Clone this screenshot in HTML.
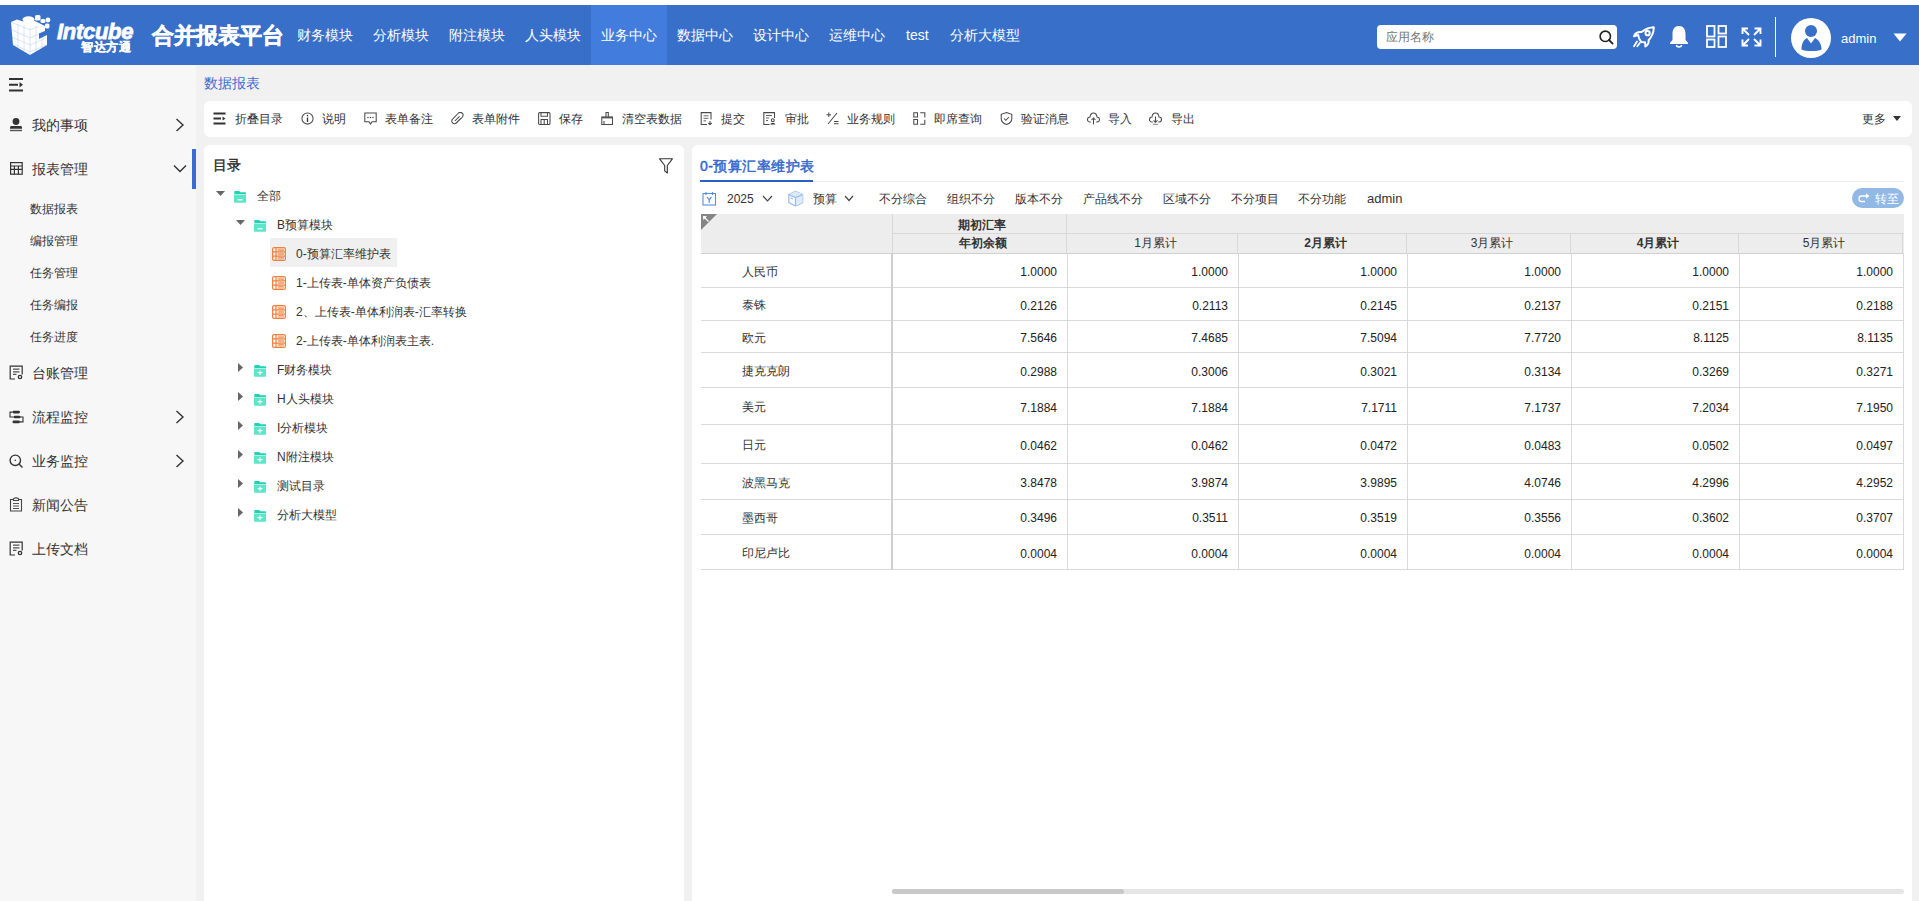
<!DOCTYPE html>
<html><head><meta charset="utf-8">
<style>
*{box-sizing:border-box;margin:0;padding:0}
html,body{width:1919px;height:901px;overflow:hidden;background:#fff;font-family:"Liberation Sans",sans-serif;color:#333}
.abs{position:absolute}
#hdr{position:absolute;left:0;top:5px;width:1919px;height:60px;background:#3870c9}
.nav{position:absolute;top:0;height:60px;line-height:60px;color:#fff;font-size:14px;white-space:nowrap}
.nav.act{background:#427ddd}
#side{position:absolute;left:0;top:65px;width:196px;height:836px;background:#f7f7f7}
#main{position:absolute;left:196px;top:65px;width:1723px;height:836px;background:#f1f1f1}
.card{position:absolute;background:#fff;border-radius:6px}
.mi{position:absolute;left:32px;font-size:14px;line-height:14px;color:#333;white-space:nowrap}
.smi{position:absolute;left:30px;font-size:12px;line-height:12px;color:#333;white-space:nowrap}
.tb{position:absolute;top:0;height:36px;line-height:36px;font-size:12px;color:#333;white-space:nowrap}
.tbi{position:absolute;top:12px;width:13px;height:13px}
.tr{position:absolute;font-size:12px;line-height:12px;color:#333;white-space:nowrap}
.flt{position:absolute;top:192px;font-size:12px;line-height:12px;color:#333;white-space:nowrap}
svg{display:block}
</style></head><body>
<!-- HEADER -->
<div id="hdr">

  <svg class="abs" style="left:0;top:-5px" width="60" height="60" viewBox="0 0 60 60">
    <g fill="#fff">
      <path d="M11,22 L17,19.5 L23,21.5 L29,19 L36,21.5 L39,23 L45,26 L45,31 L39,33.5 L39,39 L47,35 L47,45 L30,55 L13,45 Z"/>
      <ellipse cx="28.5" cy="19.5" rx="6" ry="3.2"/>
      <rect x="35" y="15" width="5.5" height="5.5" rx="1.5"/>
      <rect x="40.5" y="19" width="5" height="4" rx="1.5"/>
      <circle cx="48" cy="20" r="2.4"/>
      <rect x="45" y="23.5" width="4.5" height="5" rx="1.5"/>
    </g>
    <g stroke="#3870c9" stroke-width="0.5" opacity="0.35" fill="none">
      <path d="M18,24 L18,48 M24,25 L24,51 M30,28 L30,55 M36,26 L36,52 M42,31 L42,48"/>
      <path d="M12,30 L30,38 L46,31 M12,37 L30,45 L46,38 M13,44 L30,52 L46,45"/>
      <path d="M11,22 L30,30 L39,26"/>
    </g>
  </svg>
  <div class="abs" style="left:57px;top:16px;font-size:22px;line-height:22px;font-weight:bold;font-style:italic;color:#fff;letter-spacing:-0.3px;-webkit-text-stroke:0.8px #fff">Intcube</div>
  <div class="abs" style="left:81px;top:36px;font-size:12px;line-height:12px;font-weight:bold;color:#fff;letter-spacing:0.5px;-webkit-text-stroke:0.25px #fff">智达方通</div>
  <div class="abs" style="left:152px;top:20px;font-size:22px;line-height:22px;font-weight:bold;color:#fff;-webkit-text-stroke:0.5px #fff">合并报表平台</div>
  <div class="abs" style="left:1377px;top:20px;width:240px;height:24px;background:#fff;border-radius:4px">
    <div class="abs" style="left:9px;top:6px;font-size:12px;line-height:12px;color:#757575">应用名称</div>
    <svg class="abs" style="left:222px;top:5px" width="15" height="15" viewBox="0 0 15 15"><circle cx="6.3" cy="6.3" r="5.2" fill="none" stroke="#222" stroke-width="1.6"/><path d="M10,10 L13.6,13.6" stroke="#222" stroke-width="1.8" stroke-linecap="round"/></svg>
  </div>
  <!-- rocket -->
  <svg class="abs" style="left:1628px;top:17px" width="32" height="28" viewBox="0 0 32 28" fill="none" stroke="#fff" stroke-width="2" stroke-linejoin="round" stroke-linecap="round">
    <path d="M25.8,5.3 C21,5.5 17,7.5 13.5,10 C10,9.8 7,11 6,14.2 L10.2,13 C10.5,15.5 11.5,18 13.2,20 L17,20.2 C17.4,21.7 17.4,23.2 17.3,24.5 C19.5,23.5 21,21.5 20.6,18.2 C24.5,14 25.8,9.5 25.8,5.3 Z"/>
    <circle cx="19.6" cy="11.2" r="2.1"/>
    <path d="M6,24.2 L9,19.5 M9.3,24.2 L11.8,21" stroke-width="1.8"/>
  </svg>
  <!-- bell -->
  <svg class="abs" style="left:1669px;top:20px" width="20" height="24" viewBox="0 0 20 24">
    <path fill="#fff" d="M10,1 C5.5,1 3.5,4.5 3.5,9 L3.5,15 L1.2,17.5 C0.8,18.5 1.2,19 2,19 L18,19 C18.8,19 19.2,18.5 18.8,17.5 L16.5,15 L16.5,9 C16.5,4.5 14.5,1 10,1 Z"/>
    <path fill="none" stroke="#fff" stroke-width="1.5" d="M7.5,20 C7.5,22.5 12.5,22.5 12.5,20"/>
  </svg>
  <!-- grid -->
  <svg class="abs" style="left:1706px;top:20px" width="22" height="23" viewBox="0 0 22 23" fill="none" stroke="#fff" stroke-width="1.8">
    <rect x="1" y="1" width="7.5" height="10.5"/>
    <rect x="1" y="14.5" width="7.5" height="7.5"/>
    <rect x="12.5" y="1" width="7.5" height="7.5"/>
    <rect x="12.5" y="11.5" width="7.5" height="10.5"/>
  </svg>
  <!-- expand -->
  <svg class="abs" style="left:1741px;top:22px" width="21" height="20" viewBox="0 0 21 20" fill="none" stroke="#fff" stroke-width="1.9">
    <path d="M1.5,7 L1.5,1.5 L7,1.5 M1.5,1.5 L8,8"/>
    <path d="M13.5,1.5 L19.5,1.5 L19.5,7 M19.5,1.5 L13,8"/>
    <path d="M1.5,12.5 L1.5,18.5 L7,18.5 M1.5,18.5 L8,12"/>
    <path d="M19.5,12.5 L19.5,18.5 L13.5,18.5 M19.5,18.5 L13,12"/>
  </svg>
  <div class="abs" style="left:1775px;top:12px;width:1px;height:40px;background:#fff"></div>
  <svg class="abs" style="left:1791px;top:13px" width="40" height="40" viewBox="0 0 40 40">
    <circle cx="20" cy="20" r="20" fill="#fff"/>
    <circle cx="20" cy="13" r="6" fill="#3870c9"/>
    <path fill="#3870c9" d="M10.5,31.5 C10.5,25 13,21.5 16,20 L20,25.5 L24,20 C27,21.5 30.5,25 30.5,31.5 C27,33.5 14,33.5 10.5,31.5 Z"/>
  </svg>
  <div class="abs" style="left:1841px;top:27px;font-size:13px;line-height:13px;color:#fff">admin</div>
  <svg class="abs" style="left:1893px;top:28px" width="14" height="9" viewBox="0 0 14 9"><path d="M0.5,0.5 L13.5,0.5 L7,8.5 Z" fill="#fff"/></svg>
  <div class="nav" style="left:287px;width:76px;padding-left:10px">财务模块</div>
  <div class="nav" style="left:363px;width:76px;padding-left:10px">分析模块</div>
  <div class="nav" style="left:439px;width:76px;padding-left:10px">附注模块</div>
  <div class="nav" style="left:515px;width:76px;padding-left:10px">人头模块</div>
  <div class="nav act" style="left:591px;width:76px;padding-left:10px">业务中心</div>
  <div class="nav" style="left:667px;width:76px;padding-left:10px">数据中心</div>
  <div class="nav" style="left:743px;width:76px;padding-left:10px">设计中心</div>
  <div class="nav" style="left:819px;width:76px;padding-left:10px">运维中心</div>
  <div class="nav" style="left:896px;width:44px;padding-left:10px">test</div>
  <div class="nav" style="left:940px;width:90px;padding-left:10px">分析大模型</div>
</div>
<!-- SIDEBAR -->

<div id="side">
  <svg class="abs" style="left:8px;top:12px" width="17" height="16" viewBox="0 0 17 16"><path d="M1,2 L15,2 M1,13.5 L15,13.5 M1,7.8 L10,7.8" stroke="#333" stroke-width="2"/><path d="M11.5,5 L15,7.8 L11.5,10.5 Z" fill="#333"/></svg>
  <!-- 我的事项 -->
  <svg class="abs" style="left:9px;top:52px" width="14" height="15" viewBox="0 0 14 15"><circle cx="7" cy="4.5" r="3.4" fill="#333"/><path d="M2.5,9 L11.5,9 C12.5,9 13,9.6 13,10.5 L13,11.8 L1,11.8 L1,10.5 C1,9.6 1.5,9 2.5,9 Z" fill="#333"/><rect x="1" y="12.8" width="12" height="1.4" fill="#555"/></svg>
  <div class="mi" style="top:53px">我的事项</div>
  <svg class="abs" style="left:175px;top:53px" width="10" height="14" viewBox="0 0 10 14"><path d="M1.5,1 L8,7 L1.5,13" fill="none" stroke="#333" stroke-width="1.4"/></svg>
  <!-- 报表管理 -->
  <svg class="abs" style="left:10px;top:97px" width="13" height="13" viewBox="0 0 13 13" fill="none" stroke="#333" stroke-width="1.2"><rect x="0.6" y="0.6" width="11.6" height="11.6"/><path d="M0.6,4 L12.2,4 M0.6,7.4 L12.2,7.4 M4.4,4 L4.4,12.2 M8.4,4 L8.4,12.2"/></svg>
  <div class="mi" style="top:97px">报表管理</div>
  <svg class="abs" style="left:173px;top:99px" width="14" height="9" viewBox="0 0 14 9"><path d="M1,1.5 L7,7.5 L13,1.5" fill="none" stroke="#333" stroke-width="1.4"/></svg>
  <div class="abs" style="left:192px;top:84px;width:4px;height:40px;background:#3a6bd0"></div>
  <div class="smi" style="top:138px">数据报表</div>
  <div class="smi" style="top:170px">编报管理</div>
  <div class="smi" style="top:202px">任务管理</div>
  <div class="smi" style="top:234px">任务编报</div>
  <div class="smi" style="top:266px">任务进度</div>
  <!-- 台账管理 -->
  <svg class="abs" style="left:9px;top:300px" width="15" height="15" viewBox="0 0 15 15" fill="none" stroke="#333" stroke-width="1.2"><path d="M6,14 L1.2,14 L1.2,1.2 L13.2,1.2 L13.2,9.5"/><path d="M4,4.2 L10.5,4.2 M4,6.8 L10.5,6.8 M4,9.4 L7.5,9.4" stroke="#555" stroke-width="1.3"/><circle cx="11" cy="12" r="1.7" stroke-width="1.3"/></svg>
  <div class="mi" style="top:301px">台账管理</div>
  <!-- 流程监控 -->
  <svg class="abs" style="left:9px;top:345px" width="15" height="14" viewBox="0 0 15 14"><rect x="3.5" y="0.8" width="7.5" height="2.6" rx="1.3" fill="#333"/><rect x="4.5" y="5.7" width="7" height="2.6" rx="1.3" fill="#333"/><rect x="3.5" y="10.6" width="7.5" height="2.6" rx="1.3" fill="#333"/><path d="M3.5,2.1 L1,2.1 L1,7 L4.5,7 M11,7 L14,7 L14,11.9 L11,11.9" fill="none" stroke="#333" stroke-width="1.1"/></svg>
  <div class="mi" style="top:345px">流程监控</div>
  <svg class="abs" style="left:175px;top:345px" width="10" height="14" viewBox="0 0 10 14"><path d="M1.5,1 L8,7 L1.5,13" fill="none" stroke="#333" stroke-width="1.4"/></svg>
  <!-- 业务监控 -->
  <svg class="abs" style="left:9px;top:389px" width="15" height="15" viewBox="0 0 15 15" fill="none" stroke="#333" stroke-width="1.4"><circle cx="6.3" cy="6.3" r="5.2"/><path d="M10.2,10.2 L13.5,13.5"/><circle cx="6.3" cy="6.3" r="0.8" fill="#333" stroke="none"/></svg>
  <div class="mi" style="top:389px">业务监控</div>
  <svg class="abs" style="left:175px;top:389px" width="10" height="14" viewBox="0 0 10 14"><path d="M1.5,1 L8,7 L1.5,13" fill="none" stroke="#333" stroke-width="1.4"/></svg>
  <!-- 新闻公告 -->
  <svg class="abs" style="left:9px;top:432px" width="14" height="15" viewBox="0 0 14 15" fill="none" stroke="#444" stroke-width="1.1"><path d="M4.5,2.5 L1.5,2.5 L1.5,14 L12.5,14 L12.5,2.5 L9.5,2.5"/><path d="M4.5,3.5 L4.5,2 C4.5,0.5 9.5,0.5 9.5,2 L9.5,3.5 Z"/><path d="M4,6.5 L10,6.5 M4,9 L10,9 M4,11.5 L10,11.5" stroke="#555"/></svg>
  <div class="mi" style="top:433px">新闻公告</div>
  <!-- 上传文档 -->
  <svg class="abs" style="left:9px;top:476px" width="15" height="15" viewBox="0 0 15 15" fill="none" stroke="#333" stroke-width="1.2"><path d="M6,14 L1.2,14 L1.2,1.2 L13.2,1.2 L13.2,9.5"/><path d="M4,4.2 L10.5,4.2 M4,6.8 L10.5,6.8 M4,9.4 L7.5,9.4" stroke="#555" stroke-width="1.3"/><circle cx="11" cy="12" r="1.7" stroke-width="1.3"/></svg>
  <div class="mi" style="top:477px">上传文档</div>
</div>
<!-- MAIN -->
<div id="main"></div>
<div class="abs" style="left:204px;top:76px;font-size:14px;line-height:14px;color:#3d6bd0">数据报表</div>
<div class="card" style="left:204px;top:101px;width:1708px;height:36px"></div>
<div class="card" style="left:204px;top:145px;width:480px;height:770px"></div>
<div class="card" style="left:692px;top:145px;width:1220px;height:770px"></div>
<!-- TOOLBAR -->
<svg class="abs" style="left:213px;top:112px" width="13" height="13" viewBox="0 0 13 13"><path d="M0.5,1.5 L12.5,1.5 M0.5,11.5 L12.5,11.5 M0.5,6.5 L8,6.5" stroke="#333" stroke-width="1.8"/><path d="M9.5,4.5 L12.5,6.5 L9.5,8.5 Z" fill="#333"/></svg>
<div class="abs" style="left:235px;top:113px;font-size:12px;line-height:12px;color:#333;white-space:nowrap">折叠目录</div>
<svg class="abs" style="left:301px;top:112px" width="13" height="13" viewBox="0 0 13 13"><circle cx="6.5" cy="6.5" r="5.6" fill="none" stroke="#4a4a4a" stroke-width="1.05"/><path d="M6.5,5.5 L6.5,10" stroke="#333" stroke-width="1.3"/><circle cx="6.5" cy="3.6" r="0.8" fill="#333"/></svg>
<div class="abs" style="left:322px;top:113px;font-size:12px;line-height:12px;color:#333;white-space:nowrap">说明</div>
<svg class="abs" style="left:364px;top:112px" width="13" height="13" viewBox="0 0 13 13"><path d="M0.8,1 L12.2,1 L12.2,9.8 L8,9.8 L6.5,12 L5,9.8 L0.8,9.8 Z" fill="none" stroke="#4a4a4a" stroke-width="1.05"/><circle cx="4" cy="5.5" r="0.7" fill="#333"/><circle cx="6.5" cy="5.5" r="0.7" fill="#333"/><circle cx="9" cy="5.5" r="0.7" fill="#333"/></svg>
<div class="abs" style="left:385px;top:113px;font-size:12px;line-height:12px;color:#333;white-space:nowrap">表单备注</div>
<svg class="abs" style="left:451px;top:112px" width="13" height="13" viewBox="0 0 13 13"><path d="M5,11.5 L11,5.5 C12.5,4 12.5,2 11,1 C9.8,0 8,0.3 7,1.5 L1.8,6.8 C0.5,8 0.5,9.8 1.5,10.8 C2.5,11.8 4.3,11.8 5.3,10.8 L10,6 M3.8,9 L8.5,4.3" fill="none" stroke="#4a4a4a" stroke-width="1.05"/></svg>
<div class="abs" style="left:472px;top:113px;font-size:12px;line-height:12px;color:#333;white-space:nowrap">表单附件</div>
<svg class="abs" style="left:538px;top:112px" width="13" height="13" viewBox="0 0 13 13"><rect x="0.6" y="0.6" width="11.4" height="11.8" rx="1" fill="none" stroke="#4a4a4a" stroke-width="1.05"/><path d="M3,0.8 L3,4.3 L9.5,4.3 L9.5,0.8 M3,12.3 L3,7.5 L9.5,7.5 L9.5,12.3 M6.2,7.5 L6.2,12.3" fill="none" stroke="#4a4a4a" stroke-width="1.05"/></svg>
<div class="abs" style="left:559px;top:113px;font-size:12px;line-height:12px;color:#333;white-space:nowrap">保存</div>
<svg class="abs" style="left:601px;top:112px" width="13" height="13" viewBox="0 0 13 13"><path d="M0.8,12.4 L11.5,12.4 L11.5,5 L0.8,5 Z M0.8,5.2 L11.5,5.2" fill="none" stroke="#4a4a4a" stroke-width="1.05"/><path d="M0.8,5.6 L11.5,5.6" stroke="#555" stroke-width="1.6"/><path d="M5,5 L5,0.5 L7.3,0.5 L7.3,5 M3,12.2 L3,9" fill="none" stroke="#4a4a4a" stroke-width="1.05"/></svg>
<div class="abs" style="left:622px;top:113px;font-size:12px;line-height:12px;color:#333;white-space:nowrap">清空表数据</div>
<svg class="abs" style="left:700px;top:112px" width="13" height="13" viewBox="0 0 13 13"><path d="M7,12.4 L1.2,12.4 L1.2,0.6 L11,0.6 L11,7.5" fill="none" stroke="#4a4a4a" stroke-width="1.05"/><path d="M3.5,3.8 L8.5,3.8 M3.5,6.3 L8.5,6.3 M3.5,8.8 L6,8.8" stroke="#666" stroke-width="1"/><path d="M10,9 L10,12.5 M8.3,10.8 L10,12.8 L11.7,10.8" fill="none" stroke="#4a4a4a" stroke-width="1.05"/></svg>
<div class="abs" style="left:721px;top:113px;font-size:12px;line-height:12px;color:#333;white-space:nowrap">提交</div>
<svg class="abs" style="left:763px;top:112px" width="13" height="13" viewBox="0 0 13 13"><path d="M6.5,12.4 L0.8,12.4 L0.8,0.6 L11.5,0.6 L11.5,6" fill="none" stroke="#4a4a4a" stroke-width="1.05"/><path d="M3,3.5 L9,3.5 M3,6 L6,6 M3,8.5 L5,8.5" stroke="#666" stroke-width="1"/><circle cx="9.8" cy="8.2" r="1.4" fill="none" stroke="#4a4a4a" stroke-width="1.05"/><path d="M7.3,12.5 C7.3,10.5 12.3,10.5 12.3,12.5 Z" fill="#333"/></svg>
<div class="abs" style="left:785px;top:113px;font-size:12px;line-height:12px;color:#333;white-space:nowrap">审批</div>
<svg class="abs" style="left:826px;top:112px" width="13" height="13" viewBox="0 0 13 13"><path d="M0.5,2.8 L5,2.8 M2.8,0.5 L2.8,5 M11,1 L2,12" fill="none" stroke="#4a4a4a" stroke-width="1.05" stroke-width="1.3"/><path d="M8,9.5 L12.5,9.5 M8,11.8 L12.5,11.8" fill="none" stroke="#4a4a4a" stroke-width="1.05" stroke-width="1.3"/></svg>
<div class="abs" style="left:847px;top:113px;font-size:12px;line-height:12px;color:#333;white-space:nowrap">业务规则</div>
<svg class="abs" style="left:913px;top:112px" width="13" height="13" viewBox="0 0 13 13"><path d="M0.8,0.8 L4.5,0.8 L4.5,5 L0.8,5 Z M0.8,7.5 L0.8,12.2 L4.5,12.2 L4.5,7.5 Z M7.2,0.8 L11.8,0.8 L11.8,5.5 M7.2,12.2 L11.8,12.2 L11.8,7.8" fill="none" stroke="#4a4a4a" stroke-width="1.05" stroke-width="1.3"/></svg>
<div class="abs" style="left:934px;top:113px;font-size:12px;line-height:12px;color:#333;white-space:nowrap">即席查询</div>
<svg class="abs" style="left:1000px;top:112px" width="13" height="13" viewBox="0 0 13 13"><path d="M6.5,0.6 L11.8,2.3 L11.8,6.5 C11.8,9.5 9.5,11.5 6.5,12.5 C3.5,11.5 1.2,9.5 1.2,6.5 L1.2,2.3 Z" fill="none" stroke="#4a4a4a" stroke-width="1.05"/><path d="M4,6.5 L5.8,8.3 L9,5" fill="none" stroke="#4a4a4a" stroke-width="1.05"/></svg>
<div class="abs" style="left:1021px;top:113px;font-size:12px;line-height:12px;color:#333;white-space:nowrap">验证消息</div>
<svg class="abs" style="left:1087px;top:112px" width="13" height="13" viewBox="0 0 13 13"><path d="M3.8,10 L3,10 C1.3,10 0.5,8.8 0.5,7.5 C0.5,6 1.6,5 3,5 C3.3,2.5 4.8,1 6.5,1 C8.2,1 9.7,2.5 10,5 C11.4,5 12.5,6 12.5,7.5 C12.5,8.8 11.7,10 10,10 L9.2,10" fill="none" stroke="#4a4a4a" stroke-width="1.05"/><path d="M6.5,12.5 L6.5,6 M4.5,8 L6.5,6 L8.5,8" fill="none" stroke="#4a4a4a" stroke-width="1.05"/></svg>
<div class="abs" style="left:1108px;top:113px;font-size:12px;line-height:12px;color:#333;white-space:nowrap">导入</div>
<svg class="abs" style="left:1149px;top:112px" width="13" height="13" viewBox="0 0 13 13"><path d="M3.8,10 L3,10 C1.3,10 0.5,8.8 0.5,7.5 C0.5,6 1.6,5 3,5 C3.3,2.5 4.8,1 6.5,1 C8.2,1 9.7,2.5 10,5 C11.4,5 12.5,6 12.5,7.5 C12.5,8.8 11.7,10 10,10 L9.2,10" fill="none" stroke="#4a4a4a" stroke-width="1.05"/><path d="M6.5,4.5 L6.5,10.3 M4.5,8.3 L6.5,10.3 L8.5,8.3" fill="none" stroke="#4a4a4a" stroke-width="1.05"/><path d="M3.8,12.3 L9.2,12.3" stroke="#888" stroke-width="1.1"/></svg>
<div class="abs" style="left:1171px;top:113px;font-size:12px;line-height:12px;color:#333;white-space:nowrap">导出</div>
<div class="abs" style="left:1862px;top:113px;font-size:12px;line-height:12px;color:#333">更多</div>
<svg class="abs" style="left:1893px;top:116px" width="8" height="5" viewBox="0 0 8 5"><path d="M0,0 L8,0 L4,5 Z" fill="#333"/></svg>
<!-- CATALOG -->
<div class="abs" style="left:213px;top:158px;font-size:14px;line-height:14px;color:#222;-webkit-text-stroke:0.3px #222">目录</div>
<svg class="abs" style="left:659px;top:158px" width="14" height="16" viewBox="0 0 14 16"><path d="M0.6,0.8 L13.4,0.8 L8.3,7.5 L8.3,15 L5.7,12.8 L5.7,7.5 Z" fill="none" stroke="#333" stroke-width="1.1" stroke-linejoin="round"/></svg>
<div class="abs" style="left:270px;top:238px;width:127px;height:29px;background:#f0f0f0"></div>
<svg class="abs" style="left:216px;top:191px" width="9" height="5" viewBox="0 0 9 5"><path d="M0,0 L9,0 L4.5,5 Z" fill="#666"/></svg>
<svg class="abs" style="left:234px;top:191px" width="12" height="12" viewBox="0 0 12 12"><path d="M0.3,0.8 C0.3,0.3 0.5,0 1,0 L5,0 L6.5,1.3 L11.3,1.3 C11.7,1.3 12,1.6 12,2 L12,3 L0.3,3 Z" fill="#1ed2b3"/><path d="M0,3.6 L12,3.6 L12,10.8 C12,11.4 11.5,11.8 11,11.8 L1,11.8 C0.5,11.8 0,11.4 0,10.8 Z" fill="#5de5ca"/><path d="M3.5,8.8 L8.5,8.8" stroke="#fff" stroke-width="1.2"/></svg>
<div class="tr" style="left:257px;top:190px">全部</div>
<svg class="abs" style="left:236px;top:220px" width="9" height="5" viewBox="0 0 9 5"><path d="M0,0 L9,0 L4.5,5 Z" fill="#666"/></svg>
<svg class="abs" style="left:254px;top:220px" width="12" height="12" viewBox="0 0 12 12"><path d="M0.3,0.8 C0.3,0.3 0.5,0 1,0 L5,0 L6.5,1.3 L11.3,1.3 C11.7,1.3 12,1.6 12,2 L12,3 L0.3,3 Z" fill="#1ed2b3"/><path d="M0,3.6 L12,3.6 L12,10.8 C12,11.4 11.5,11.8 11,11.8 L1,11.8 C0.5,11.8 0,11.4 0,10.8 Z" fill="#5de5ca"/><path d="M3.5,8.8 L8.5,8.8" stroke="#fff" stroke-width="1.2"/></svg>
<div class="tr" style="left:277px;top:219px">B预算模块</div>
<svg class="abs" style="left:272px;top:247px" width="14" height="14" viewBox="0 0 14 14"><rect x="0.6" y="0.6" width="12.8" height="12.8" rx="1.5" fill="none" stroke="#f47f3c" stroke-width="1.2"/><path d="M4,0.6 L4,13.4 M0.6,4.8 L13.4,4.8 M0.6,9.2 L13.4,9.2" stroke="#f47f3c" stroke-width="1.2"/><rect x="6" y="2.2" width="5.8" height="1.4" rx="0.7" fill="none" stroke="#f47f3c" stroke-width="0.8"/><rect x="6" y="6.3" width="5.8" height="1.4" rx="0.7" fill="none" stroke="#f47f3c" stroke-width="0.8"/><rect x="6" y="10.5" width="5.8" height="1.4" rx="0.7" fill="none" stroke="#f47f3c" stroke-width="0.8"/></svg>
<div class="tr" style="left:296px;top:248px">0-预算汇率维护表</div>
<svg class="abs" style="left:272px;top:276px" width="14" height="14" viewBox="0 0 14 14"><rect x="0.6" y="0.6" width="12.8" height="12.8" rx="1.5" fill="none" stroke="#f47f3c" stroke-width="1.2"/><path d="M4,0.6 L4,13.4 M0.6,4.8 L13.4,4.8 M0.6,9.2 L13.4,9.2" stroke="#f47f3c" stroke-width="1.2"/><rect x="6" y="2.2" width="5.8" height="1.4" rx="0.7" fill="none" stroke="#f47f3c" stroke-width="0.8"/><rect x="6" y="6.3" width="5.8" height="1.4" rx="0.7" fill="none" stroke="#f47f3c" stroke-width="0.8"/><rect x="6" y="10.5" width="5.8" height="1.4" rx="0.7" fill="none" stroke="#f47f3c" stroke-width="0.8"/></svg>
<div class="tr" style="left:296px;top:277px">1-上传表-单体资产负债表</div>
<svg class="abs" style="left:272px;top:305px" width="14" height="14" viewBox="0 0 14 14"><rect x="0.6" y="0.6" width="12.8" height="12.8" rx="1.5" fill="none" stroke="#f47f3c" stroke-width="1.2"/><path d="M4,0.6 L4,13.4 M0.6,4.8 L13.4,4.8 M0.6,9.2 L13.4,9.2" stroke="#f47f3c" stroke-width="1.2"/><rect x="6" y="2.2" width="5.8" height="1.4" rx="0.7" fill="none" stroke="#f47f3c" stroke-width="0.8"/><rect x="6" y="6.3" width="5.8" height="1.4" rx="0.7" fill="none" stroke="#f47f3c" stroke-width="0.8"/><rect x="6" y="10.5" width="5.8" height="1.4" rx="0.7" fill="none" stroke="#f47f3c" stroke-width="0.8"/></svg>
<div class="tr" style="left:296px;top:306px">2、上传表-单体利润表-汇率转换</div>
<svg class="abs" style="left:272px;top:334px" width="14" height="14" viewBox="0 0 14 14"><rect x="0.6" y="0.6" width="12.8" height="12.8" rx="1.5" fill="none" stroke="#f47f3c" stroke-width="1.2"/><path d="M4,0.6 L4,13.4 M0.6,4.8 L13.4,4.8 M0.6,9.2 L13.4,9.2" stroke="#f47f3c" stroke-width="1.2"/><rect x="6" y="2.2" width="5.8" height="1.4" rx="0.7" fill="none" stroke="#f47f3c" stroke-width="0.8"/><rect x="6" y="6.3" width="5.8" height="1.4" rx="0.7" fill="none" stroke="#f47f3c" stroke-width="0.8"/><rect x="6" y="10.5" width="5.8" height="1.4" rx="0.7" fill="none" stroke="#f47f3c" stroke-width="0.8"/></svg>
<div class="tr" style="left:296px;top:335px">2-上传表-单体利润表主表.</div>
<svg class="abs" style="left:238px;top:363px" width="5" height="9" viewBox="0 0 5 9"><path d="M0,0 L5,4.5 L0,9 Z" fill="#666"/></svg>
<svg class="abs" style="left:254px;top:365px" width="12" height="12" viewBox="0 0 12 12"><path d="M0.3,0.8 C0.3,0.3 0.5,0 1,0 L5,0 L6.5,1.3 L11.3,1.3 C11.7,1.3 12,1.6 12,2 L12,3 L0.3,3 Z" fill="#1ed2b3"/><path d="M0,3.6 L12,3.6 L12,10.8 C12,11.4 11.5,11.8 11,11.8 L1,11.8 C0.5,11.8 0,11.4 0,10.8 Z" fill="#5de5ca"/><path d="M3.6,7.6 L8.4,7.6 M6,5.4 L6,10" stroke="#fff" stroke-width="1.1"/></svg>
<div class="tr" style="left:277px;top:364px">F财务模块</div>
<svg class="abs" style="left:238px;top:392px" width="5" height="9" viewBox="0 0 5 9"><path d="M0,0 L5,4.5 L0,9 Z" fill="#666"/></svg>
<svg class="abs" style="left:254px;top:394px" width="12" height="12" viewBox="0 0 12 12"><path d="M0.3,0.8 C0.3,0.3 0.5,0 1,0 L5,0 L6.5,1.3 L11.3,1.3 C11.7,1.3 12,1.6 12,2 L12,3 L0.3,3 Z" fill="#1ed2b3"/><path d="M0,3.6 L12,3.6 L12,10.8 C12,11.4 11.5,11.8 11,11.8 L1,11.8 C0.5,11.8 0,11.4 0,10.8 Z" fill="#5de5ca"/><path d="M3.6,7.6 L8.4,7.6 M6,5.4 L6,10" stroke="#fff" stroke-width="1.1"/></svg>
<div class="tr" style="left:277px;top:393px">H人头模块</div>
<svg class="abs" style="left:238px;top:421px" width="5" height="9" viewBox="0 0 5 9"><path d="M0,0 L5,4.5 L0,9 Z" fill="#666"/></svg>
<svg class="abs" style="left:254px;top:423px" width="12" height="12" viewBox="0 0 12 12"><path d="M0.3,0.8 C0.3,0.3 0.5,0 1,0 L5,0 L6.5,1.3 L11.3,1.3 C11.7,1.3 12,1.6 12,2 L12,3 L0.3,3 Z" fill="#1ed2b3"/><path d="M0,3.6 L12,3.6 L12,10.8 C12,11.4 11.5,11.8 11,11.8 L1,11.8 C0.5,11.8 0,11.4 0,10.8 Z" fill="#5de5ca"/><path d="M3.6,7.6 L8.4,7.6 M6,5.4 L6,10" stroke="#fff" stroke-width="1.1"/></svg>
<div class="tr" style="left:277px;top:422px">I分析模块</div>
<svg class="abs" style="left:238px;top:450px" width="5" height="9" viewBox="0 0 5 9"><path d="M0,0 L5,4.5 L0,9 Z" fill="#666"/></svg>
<svg class="abs" style="left:254px;top:452px" width="12" height="12" viewBox="0 0 12 12"><path d="M0.3,0.8 C0.3,0.3 0.5,0 1,0 L5,0 L6.5,1.3 L11.3,1.3 C11.7,1.3 12,1.6 12,2 L12,3 L0.3,3 Z" fill="#1ed2b3"/><path d="M0,3.6 L12,3.6 L12,10.8 C12,11.4 11.5,11.8 11,11.8 L1,11.8 C0.5,11.8 0,11.4 0,10.8 Z" fill="#5de5ca"/><path d="M3.6,7.6 L8.4,7.6 M6,5.4 L6,10" stroke="#fff" stroke-width="1.1"/></svg>
<div class="tr" style="left:277px;top:451px">N附注模块</div>
<svg class="abs" style="left:238px;top:479px" width="5" height="9" viewBox="0 0 5 9"><path d="M0,0 L5,4.5 L0,9 Z" fill="#666"/></svg>
<svg class="abs" style="left:254px;top:481px" width="12" height="12" viewBox="0 0 12 12"><path d="M0.3,0.8 C0.3,0.3 0.5,0 1,0 L5,0 L6.5,1.3 L11.3,1.3 C11.7,1.3 12,1.6 12,2 L12,3 L0.3,3 Z" fill="#1ed2b3"/><path d="M0,3.6 L12,3.6 L12,10.8 C12,11.4 11.5,11.8 11,11.8 L1,11.8 C0.5,11.8 0,11.4 0,10.8 Z" fill="#5de5ca"/><path d="M3.6,7.6 L8.4,7.6 M6,5.4 L6,10" stroke="#fff" stroke-width="1.1"/></svg>
<div class="tr" style="left:277px;top:480px">测试目录</div>
<svg class="abs" style="left:238px;top:508px" width="5" height="9" viewBox="0 0 5 9"><path d="M0,0 L5,4.5 L0,9 Z" fill="#666"/></svg>
<svg class="abs" style="left:254px;top:510px" width="12" height="12" viewBox="0 0 12 12"><path d="M0.3,0.8 C0.3,0.3 0.5,0 1,0 L5,0 L6.5,1.3 L11.3,1.3 C11.7,1.3 12,1.6 12,2 L12,3 L0.3,3 Z" fill="#1ed2b3"/><path d="M0,3.6 L12,3.6 L12,10.8 C12,11.4 11.5,11.8 11,11.8 L1,11.8 C0.5,11.8 0,11.4 0,10.8 Z" fill="#5de5ca"/><path d="M3.6,7.6 L8.4,7.6 M6,5.4 L6,10" stroke="#fff" stroke-width="1.1"/></svg>
<div class="tr" style="left:277px;top:509px">分析大模型</div>
<!-- REPORT -->
<div class="abs" style="left:701px;top:181px;width:1203px;height:1px;background:#ebebeb"></div>
<div class="abs" style="left:700px;top:159px;font-size:14px;line-height:14px;color:#3065cc;-webkit-text-stroke:0.45px #3065cc;letter-spacing:0.5px;white-space:nowrap">0-预算汇率维护表</div>
<div class="abs" style="left:700px;top:180px;width:113px;height:2px;background:#2a5fc9"></div>
<svg class="abs" style="left:702px;top:191px" width="15" height="15" viewBox="0 0 15 15" fill="none" stroke="#5590dc" stroke-width="1.1"><rect x="1" y="2.5" width="12.5" height="11.5"/><path d="M4,1 L4,4 M10.5,1 L10.5,4"/><path d="M5,6 L7.2,8.8 L9.5,6 M7.2,8.8 L7.2,12" stroke-width="1.2"/></svg>
<div class="flt" style="left:727px;top:193px">2025</div>
<svg class="abs" style="left:762px;top:195px" width="11" height="7" viewBox="0 0 11 7"><path d="M1,1 L5.5,5.8 L10,1" fill="none" stroke="#444" stroke-width="1.2"/></svg>
<svg class="abs" style="left:787px;top:190px" width="17" height="17" viewBox="0 0 17 17"><path d="M1.8,4.6 L8.5,1.3 L15.6,4.6 L15.6,12.6 L8.5,16 L1.8,12.6 Z" fill="#fff" stroke="#9ebdf0" stroke-width="1.3" stroke-linejoin="round"/><path d="M8.5,7.5 L15.6,4.6 L15.6,12.6 L8.5,16 Z" fill="#e0eafb"/><path d="M8.5,1.3 L15.6,4.6 L8.5,7.6 L1.8,4.6 Z" fill="#dde8fa"/><path d="M1.8,4.6 L8.5,7.6 L15.6,4.6 M8.5,7.6 L8.5,16" fill="none" stroke="#9ebdf0" stroke-width="1.3"/><path d="M3.5,7.8 L6,9" stroke="#9ebdf0" stroke-width="1.2"/></svg>
<div class="flt" style="left:813px;top:193px">预算</div>
<svg class="abs" style="left:844px;top:195px" width="10" height="7" viewBox="0 0 10 7"><path d="M1,1 L5,5.5 L9,1" fill="none" stroke="#444" stroke-width="1.2"/></svg>
<div class="flt" style="left:879px;top:193px">不分综合</div>
<div class="flt" style="left:947px;top:193px">组织不分</div>
<div class="flt" style="left:1015px;top:193px">版本不分</div>
<div class="flt" style="left:1083px;top:193px">产品线不分</div>
<div class="flt" style="left:1163px;top:193px">区域不分</div>
<div class="flt" style="left:1231px;top:193px">不分项目</div>
<div class="flt" style="left:1298px;top:193px">不分功能</div>
<div class="flt" style="left:1367px;top:192px;font-size:13px;line-height:13px">admin</div>
<div class="abs" style="left:1852px;top:188px;width:52px;height:20px;border-radius:10px;background:#92b9e6"></div>
<svg class="abs" style="left:1858px;top:193px" width="12" height="10" viewBox="0 0 12 10"><path d="M10,3 L3.5,3 C1.8,3 1,4 1,5.7 C1,7.4 1.8,8.5 3.5,8.5 L7,8.5" fill="none" stroke="#fff" stroke-width="1.3"/><path d="M8,0.3 L11.5,3 L8,5.7 Z" fill="#fff"/></svg>
<div class="abs" style="left:1875px;top:193px;font-size:12px;line-height:12px;color:#fff">转至</div>
<!-- TABLE -->
<div class="abs" style="left:701px;top:214px;width:1203px;height:40px;background:#ededed"></div>
<div class="abs" style="left:701px;top:253px;width:1203px;height:1px;background:#d0d0d0"></div>
<div class="abs" style="left:892px;top:233px;width:1012px;height:1px;background:#d8d8d8"></div>
<div class="abs" style="left:892px;top:214px;width:1px;height:39px;background:#d8d8d8"></div>
<div class="abs" style="left:1066px;top:214px;width:1px;height:39px;background:#d8d8d8"></div>
<div class="abs" style="left:1237px;top:233px;width:1px;height:20px;background:#d8d8d8"></div>
<div class="abs" style="left:1406px;top:233px;width:1px;height:20px;background:#d8d8d8"></div>
<div class="abs" style="left:1570px;top:233px;width:1px;height:20px;background:#d8d8d8"></div>
<div class="abs" style="left:1738px;top:233px;width:1px;height:20px;background:#d8d8d8"></div>
<div class="abs" style="left:1902px;top:233px;width:1px;height:20px;background:#d8d8d8"></div>
<svg class="abs" style="left:701px;top:214px" width="17" height="17" viewBox="0 0 17 17"><path d="M0,0 L16,0 L0,16 Z" fill="#858585"/><path d="M2.6,2.6 L7.5,7.5" stroke="#fff" stroke-width="1.1"/><path d="M2,2 L6,2.3 L2.3,6 Z" fill="#fff"/></svg>
<div class="abs" style="left:895px;top:219px;width:174px;text-align:center;font-size:12px;line-height:12px;font-weight:bold;color:#333">期初汇率</div>
<div class="abs" style="left:895px;top:237px;width:175px;text-align:center;font-size:12px;line-height:12px;font-weight:bold;color:#333">年初余额</div>
<div class="abs" style="left:1070px;top:237px;width:171px;text-align:center;font-size:12px;line-height:12px;color:#333">1月累计</div>
<div class="abs" style="left:1241px;top:237px;width:169px;text-align:center;font-size:12px;line-height:12px;font-weight:bold;color:#333">2月累计</div>
<div class="abs" style="left:1410px;top:237px;width:164px;text-align:center;font-size:12px;line-height:12px;color:#333">3月累计</div>
<div class="abs" style="left:1574px;top:237px;width:168px;text-align:center;font-size:12px;line-height:12px;font-weight:bold;color:#333">4月累计</div>
<div class="abs" style="left:1742px;top:237px;width:164px;text-align:center;font-size:12px;line-height:12px;color:#333">5月累计</div>
<div class="abs" style="left:701px;top:287px;width:1203px;height:1px;background:#d9d9d9"></div>
<div class="abs" style="left:701px;top:320px;width:1203px;height:1px;background:#d9d9d9"></div>
<div class="abs" style="left:701px;top:352px;width:1203px;height:1px;background:#d9d9d9"></div>
<div class="abs" style="left:701px;top:387px;width:1203px;height:1px;background:#d9d9d9"></div>
<div class="abs" style="left:701px;top:424px;width:1203px;height:1px;background:#d9d9d9"></div>
<div class="abs" style="left:701px;top:463px;width:1203px;height:1px;background:#d9d9d9"></div>
<div class="abs" style="left:701px;top:499px;width:1203px;height:1px;background:#d9d9d9"></div>
<div class="abs" style="left:701px;top:534px;width:1203px;height:1px;background:#d9d9d9"></div>
<div class="abs" style="left:701px;top:569px;width:1203px;height:1px;background:#d9d9d9"></div>
<div class="abs" style="left:891px;top:254px;width:2px;height:316px;background:#cfcfcf"></div>
<div class="abs" style="left:1067px;top:253px;width:1px;height:316px;background:#d9d9d9"></div>
<div class="abs" style="left:1238px;top:253px;width:1px;height:316px;background:#d9d9d9"></div>
<div class="abs" style="left:1407px;top:253px;width:1px;height:316px;background:#d9d9d9"></div>
<div class="abs" style="left:1571px;top:253px;width:1px;height:316px;background:#d9d9d9"></div>
<div class="abs" style="left:1739px;top:253px;width:1px;height:316px;background:#d9d9d9"></div>
<div class="abs" style="left:1903px;top:253px;width:1px;height:316px;background:#d9d9d9"></div>
<div class="abs" style="left:742px;top:266px;font-size:12px;line-height:12px;color:#333;white-space:nowrap">人民币</div>
<div class="abs" style="left:957px;top:266px;width:100px;text-align:right;font-size:12px;line-height:12px;color:#222">1.0000</div>
<div class="abs" style="left:1128px;top:266px;width:100px;text-align:right;font-size:12px;line-height:12px;color:#222">1.0000</div>
<div class="abs" style="left:1297px;top:266px;width:100px;text-align:right;font-size:12px;line-height:12px;color:#222">1.0000</div>
<div class="abs" style="left:1461px;top:266px;width:100px;text-align:right;font-size:12px;line-height:12px;color:#222">1.0000</div>
<div class="abs" style="left:1629px;top:266px;width:100px;text-align:right;font-size:12px;line-height:12px;color:#222">1.0000</div>
<div class="abs" style="left:1793px;top:266px;width:100px;text-align:right;font-size:12px;line-height:12px;color:#222">1.0000</div>
<div class="abs" style="left:742px;top:299px;font-size:12px;line-height:12px;color:#333;white-space:nowrap">泰铢</div>
<div class="abs" style="left:957px;top:300px;width:100px;text-align:right;font-size:12px;line-height:12px;color:#222">0.2126</div>
<div class="abs" style="left:1128px;top:300px;width:100px;text-align:right;font-size:12px;line-height:12px;color:#222">0.2113</div>
<div class="abs" style="left:1297px;top:300px;width:100px;text-align:right;font-size:12px;line-height:12px;color:#222">0.2145</div>
<div class="abs" style="left:1461px;top:300px;width:100px;text-align:right;font-size:12px;line-height:12px;color:#222">0.2137</div>
<div class="abs" style="left:1629px;top:300px;width:100px;text-align:right;font-size:12px;line-height:12px;color:#222">0.2151</div>
<div class="abs" style="left:1793px;top:300px;width:100px;text-align:right;font-size:12px;line-height:12px;color:#222">0.2188</div>
<div class="abs" style="left:742px;top:332px;font-size:12px;line-height:12px;color:#333;white-space:nowrap">欧元</div>
<div class="abs" style="left:957px;top:332px;width:100px;text-align:right;font-size:12px;line-height:12px;color:#222">7.5646</div>
<div class="abs" style="left:1128px;top:332px;width:100px;text-align:right;font-size:12px;line-height:12px;color:#222">7.4685</div>
<div class="abs" style="left:1297px;top:332px;width:100px;text-align:right;font-size:12px;line-height:12px;color:#222">7.5094</div>
<div class="abs" style="left:1461px;top:332px;width:100px;text-align:right;font-size:12px;line-height:12px;color:#222">7.7720</div>
<div class="abs" style="left:1629px;top:332px;width:100px;text-align:right;font-size:12px;line-height:12px;color:#222">8.1125</div>
<div class="abs" style="left:1793px;top:332px;width:100px;text-align:right;font-size:12px;line-height:12px;color:#222">8.1135</div>
<div class="abs" style="left:742px;top:365px;font-size:12px;line-height:12px;color:#333;white-space:nowrap">捷克克朗</div>
<div class="abs" style="left:957px;top:366px;width:100px;text-align:right;font-size:12px;line-height:12px;color:#222">0.2988</div>
<div class="abs" style="left:1128px;top:366px;width:100px;text-align:right;font-size:12px;line-height:12px;color:#222">0.3006</div>
<div class="abs" style="left:1297px;top:366px;width:100px;text-align:right;font-size:12px;line-height:12px;color:#222">0.3021</div>
<div class="abs" style="left:1461px;top:366px;width:100px;text-align:right;font-size:12px;line-height:12px;color:#222">0.3134</div>
<div class="abs" style="left:1629px;top:366px;width:100px;text-align:right;font-size:12px;line-height:12px;color:#222">0.3269</div>
<div class="abs" style="left:1793px;top:366px;width:100px;text-align:right;font-size:12px;line-height:12px;color:#222">0.3271</div>
<div class="abs" style="left:742px;top:401px;font-size:12px;line-height:12px;color:#333;white-space:nowrap">美元</div>
<div class="abs" style="left:957px;top:402px;width:100px;text-align:right;font-size:12px;line-height:12px;color:#222">7.1884</div>
<div class="abs" style="left:1128px;top:402px;width:100px;text-align:right;font-size:12px;line-height:12px;color:#222">7.1884</div>
<div class="abs" style="left:1297px;top:402px;width:100px;text-align:right;font-size:12px;line-height:12px;color:#222">7.1711</div>
<div class="abs" style="left:1461px;top:402px;width:100px;text-align:right;font-size:12px;line-height:12px;color:#222">7.1737</div>
<div class="abs" style="left:1629px;top:402px;width:100px;text-align:right;font-size:12px;line-height:12px;color:#222">7.2034</div>
<div class="abs" style="left:1793px;top:402px;width:100px;text-align:right;font-size:12px;line-height:12px;color:#222">7.1950</div>
<div class="abs" style="left:742px;top:439px;font-size:12px;line-height:12px;color:#333;white-space:nowrap">日元</div>
<div class="abs" style="left:957px;top:440px;width:100px;text-align:right;font-size:12px;line-height:12px;color:#222">0.0462</div>
<div class="abs" style="left:1128px;top:440px;width:100px;text-align:right;font-size:12px;line-height:12px;color:#222">0.0462</div>
<div class="abs" style="left:1297px;top:440px;width:100px;text-align:right;font-size:12px;line-height:12px;color:#222">0.0472</div>
<div class="abs" style="left:1461px;top:440px;width:100px;text-align:right;font-size:12px;line-height:12px;color:#222">0.0483</div>
<div class="abs" style="left:1629px;top:440px;width:100px;text-align:right;font-size:12px;line-height:12px;color:#222">0.0502</div>
<div class="abs" style="left:1793px;top:440px;width:100px;text-align:right;font-size:12px;line-height:12px;color:#222">0.0497</div>
<div class="abs" style="left:742px;top:477px;font-size:12px;line-height:12px;color:#333;white-space:nowrap">波黑马克</div>
<div class="abs" style="left:957px;top:477px;width:100px;text-align:right;font-size:12px;line-height:12px;color:#222">3.8478</div>
<div class="abs" style="left:1128px;top:477px;width:100px;text-align:right;font-size:12px;line-height:12px;color:#222">3.9874</div>
<div class="abs" style="left:1297px;top:477px;width:100px;text-align:right;font-size:12px;line-height:12px;color:#222">3.9895</div>
<div class="abs" style="left:1461px;top:477px;width:100px;text-align:right;font-size:12px;line-height:12px;color:#222">4.0746</div>
<div class="abs" style="left:1629px;top:477px;width:100px;text-align:right;font-size:12px;line-height:12px;color:#222">4.2996</div>
<div class="abs" style="left:1793px;top:477px;width:100px;text-align:right;font-size:12px;line-height:12px;color:#222">4.2952</div>
<div class="abs" style="left:742px;top:512px;font-size:12px;line-height:12px;color:#333;white-space:nowrap">墨西哥</div>
<div class="abs" style="left:957px;top:512px;width:100px;text-align:right;font-size:12px;line-height:12px;color:#222">0.3496</div>
<div class="abs" style="left:1128px;top:512px;width:100px;text-align:right;font-size:12px;line-height:12px;color:#222">0.3511</div>
<div class="abs" style="left:1297px;top:512px;width:100px;text-align:right;font-size:12px;line-height:12px;color:#222">0.3519</div>
<div class="abs" style="left:1461px;top:512px;width:100px;text-align:right;font-size:12px;line-height:12px;color:#222">0.3556</div>
<div class="abs" style="left:1629px;top:512px;width:100px;text-align:right;font-size:12px;line-height:12px;color:#222">0.3602</div>
<div class="abs" style="left:1793px;top:512px;width:100px;text-align:right;font-size:12px;line-height:12px;color:#222">0.3707</div>
<div class="abs" style="left:742px;top:547px;font-size:12px;line-height:12px;color:#333;white-space:nowrap">印尼卢比</div>
<div class="abs" style="left:957px;top:548px;width:100px;text-align:right;font-size:12px;line-height:12px;color:#222">0.0004</div>
<div class="abs" style="left:1128px;top:548px;width:100px;text-align:right;font-size:12px;line-height:12px;color:#222">0.0004</div>
<div class="abs" style="left:1297px;top:548px;width:100px;text-align:right;font-size:12px;line-height:12px;color:#222">0.0004</div>
<div class="abs" style="left:1461px;top:548px;width:100px;text-align:right;font-size:12px;line-height:12px;color:#222">0.0004</div>
<div class="abs" style="left:1629px;top:548px;width:100px;text-align:right;font-size:12px;line-height:12px;color:#222">0.0004</div>
<div class="abs" style="left:1793px;top:548px;width:100px;text-align:right;font-size:12px;line-height:12px;color:#222">0.0004</div>
<div class="abs" style="left:892px;top:889px;width:1012px;height:5px;border-radius:3px;background:#e5e5e5"></div>
<div class="abs" style="left:892px;top:889px;width:232px;height:5px;border-radius:3px;background:#c8c8c8"></div>
</body></html>
